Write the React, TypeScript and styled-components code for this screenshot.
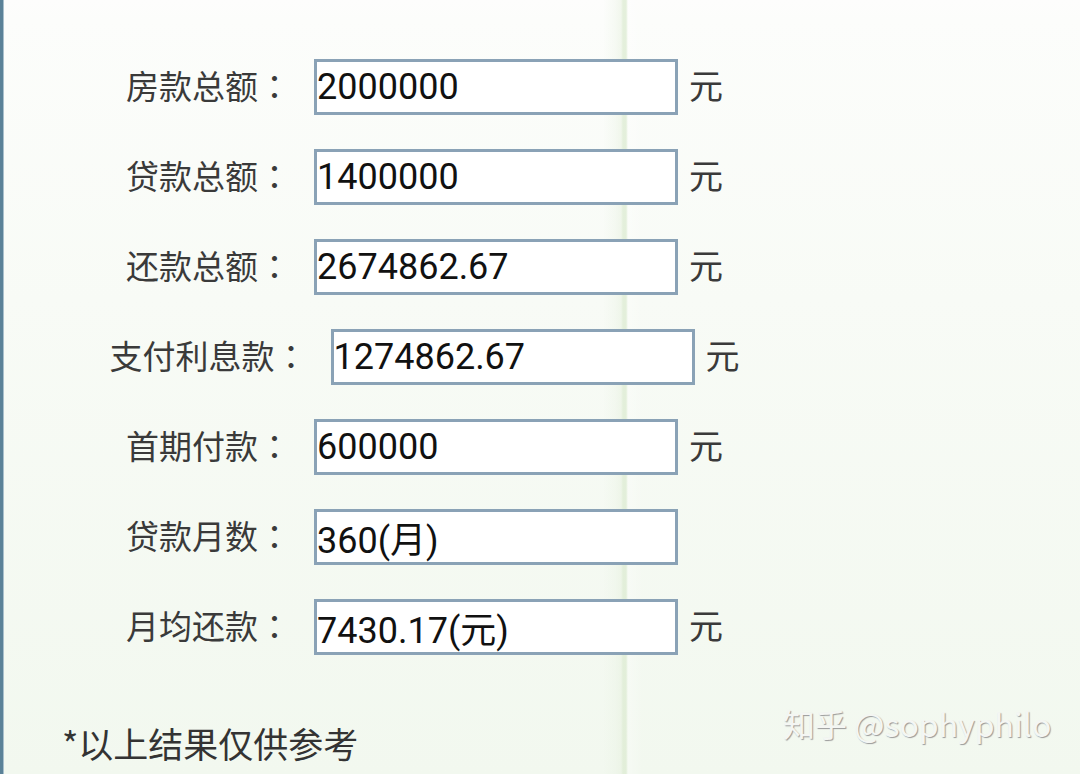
import React from "react";
import styled, { createGlobalStyle, css } from "styled-components";

const GlobalStyle = createGlobalStyle`
  html, body {
    margin: 0;
    padding: 0;
  }
  body {
    font-family: "Roboto", "Noto Sans CJK SC", sans-serif;
  }
`;

type Item = {
  label: string;
  value: string;
  unit?: string;
};

const items: Item[] = [
  { label: "房款总额", value: "2000000", unit: "元" },
  { label: "贷款总额", value: "1400000", unit: "元" },
  { label: "还款总额", value: "2674862.67", unit: "元" },
  { label: "支付利息款", value: "1274862.67", unit: "元" },
  { label: "首期付款", value: "600000", unit: "元" },
  { label: "贷款月数", value: "360(月)" },
  { label: "月均还款", value: "7430.17(元)", unit: "元" },
];

function App() {
  return (
    <>
      <GlobalStyle />
      <Page>
        <Form>
          {items.map((item) => (
            <Row key={item.label}>
              <Label>
                {item.label}
                <Colon>：</Colon>
              </Label>
              <Field>{item.value}</Field>
              <Unit>{item.unit ?? ""}</Unit>
            </Row>
          ))}
        </Form>
        <Note>*以上结果仅供参考</Note>
        <Watermark>知乎 @sophyphilo</Watermark>
      </Page>
    </>
  );
}

export default App;

const Page = styled.div(
  () => css`
    position: relative;
    box-sizing: border-box;
    width: 1080px;
    height: 774px;
    overflow: hidden;
    border-left: 3px solid #5b8298;
    background:
      linear-gradient(
        to right,
        rgba(255, 255, 255, 0) 0px,
        rgba(255, 255, 255, 0) 600px,
        rgba(232, 242, 226, 0.3) 612px,
        rgba(230, 240, 222, 0.5) 618px,
        rgba(222, 236, 212, 0.8) 620px,
        rgba(222, 236, 212, 0.8) 623px,
        rgba(255, 255, 255, 0.3) 625px,
        rgba(255, 255, 255, 0) 640px
      ),
      linear-gradient(
        to bottom,
        #fdfdfc 0px,
        #fcfdfb 20px,
        #f8fbf6 300px,
        #f2f8ef 774px
      );
    box-shadow: inset 1px 0 0 #a9c0cc;
  `
);

const Form = styled.div(
  () => css`
    width: 843px;
    padding-top: 59px;
    display: flex;
    flex-direction: column;
    gap: 34px;
  `
);

const Row = styled.div(
  () => css`
    display: flex;
    align-items: center;
    justify-content: center;
    height: 56px;
  `
);

const Label = styled.span(
  () => css`
    font-family: "Noto Sans CJK SC", sans-serif;
    font-size: 33px;
    line-height: 1;
    color: #3a3a3a;
    margin-right: 23px;
    margin-top: -4px;
    white-space: nowrap;
  `
);

const Colon = styled.span(
  () => css`
    font-family: "Noto Sans CJK TC", sans-serif;
  `
);

const Field = styled.div(
  () => css`
    box-sizing: border-box;
    width: 364px;
    height: 56px;
    border: 3px solid #8aa2b6;
    background: #ffffff;
    padding-left: 0;
    display: flex;
    align-items: center;
    font-family: "Roboto", "Noto Sans CJK SC", sans-serif;
    font-size: 36px;
    color: #111111;
    white-space: nowrap;
  `
);

const Unit = styled.span(
  () => css`
    width: 34px;
    margin-left: 11px;
    margin-top: -4px;
    font-family: "Noto Sans CJK SC", sans-serif;
    font-size: 34px;
    line-height: 1;
    color: #3a3a3a;
  `
);

const Note = styled.p(
  () => css`
    margin: 68px 0 0 59px;
    font-family: "Noto Sans CJK SC", sans-serif;
    font-size: 35px;
    line-height: 40px;
    color: #333333;
  `
);

const Watermark = styled.div(
  () => css`
    position: absolute;
    left: 780px;
    top: 700px;
    font-family: "Noto Sans CJK SC", sans-serif;
    font-size: 32px;
    line-height: 46px;
    color: #f4f6f3;
    text-shadow: 1px 1px 1px #9a9a9a;
    white-space: nowrap;
  `
);
